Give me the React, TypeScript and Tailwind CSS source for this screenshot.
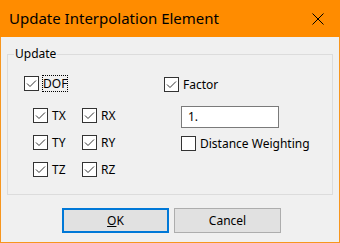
import React from "react";

function Box({ checked }: { checked?: boolean }) {
  return (
    <span className="flex h-[15px] w-[15px] shrink-0 items-center justify-center border border-[#333333] bg-white">
      {checked && (
        <svg width="13" height="13" viewBox="0 0 13 13">
          <polyline points="2,6.5 5,9.5 11,3.5" fill="none" stroke="#333333" strokeWidth="1" />
        </svg>
      )}
    </span>
  );
}

function Check({ label, checked, focus }: { label: string; checked?: boolean; focus?: boolean }) {
  return (
    <div className="flex h-[15px] items-center gap-[3px]">
      <Box checked={checked} />
      <span className={focus ? "border border-dotted border-black leading-[15px]" : "px-[1px]"}>{label}</span>
    </div>
  );
}

export default function App() {
  return (
    <div className="flex h-[243px] w-[340px] flex-col font-['Noto_Sans',sans-serif] text-[12px] text-black">
      <div className="flex h-[37px] items-center justify-between bg-[#ff8c00] pl-[9px] pr-[16px]">
        <span className="text-[15px]">Update Interpolation Element</span>
        <svg width="12" height="12" viewBox="0 0 12 12">
          <path d="M0.5 0.5 L11.5 11.5 M11.5 0.5 L0.5 11.5" stroke="#000" strokeWidth="1" />
        </svg>
      </div>
      <div className="flex flex-1 flex-col border-x border-b border-[#f7961e] bg-[#f0f0f0]">
        <div className="relative ml-[6px] mt-[17px] flex h-[141px] w-[326px] border border-[#dcdcdc] pl-[16px] pt-[21px]">
          <span className="absolute left-[6px] top-[-9px] bg-[#f0f0f0] px-[1px] leading-[16px]">Update</span>
          <div className="flex w-[140px] flex-col">
            <Check label="DOF" checked focus />
            <div className="ml-[9px] mt-[17px] grid w-[98px] grid-cols-2 gap-y-[12px]">
              <Check label="TX" checked />
              <Check label="RX" checked />
              <Check label="TY" checked />
              <Check label="RY" checked />
              <Check label="TZ" checked />
              <Check label="RZ" checked />
            </div>
          </div>
          <div className="mt-[1px] flex flex-col">
            <Check label="Factor" checked />
            <div className="ml-[17px] mt-[14px] flex h-[22px] w-[98px] items-center border border-[#7a7a7a] bg-white pl-[6px]">
              1.
            </div>
            <div className="ml-[17px] mt-[8px]">
              <Check label="Distance Weighting" />
            </div>
          </div>
        </div>
        <div className="ml-[61px] mt-[13px] flex gap-[5px]">
          <button className="flex h-[25px] w-[107px] items-center justify-center border-2 border-[#0078d7] bg-[#e1e1e1]">
            <span>
              <span className="underline">O</span>K
            </span>
          </button>
          <button className="flex h-[25px] w-[107px] items-center justify-center border border-[#adadad] bg-[#e1e1e1]">
            Cancel
          </button>
        </div>
      </div>
    </div>
  );
}
